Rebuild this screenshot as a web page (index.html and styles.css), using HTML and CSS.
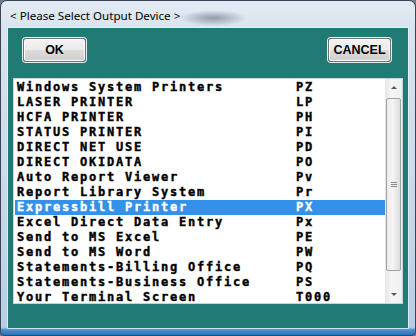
FILE: index.html
```html
<!DOCTYPE html>
<html>
<head>
  <title>Please Select Output Device</title>
  <link rel="stylesheet" href="styles.css">
</head>
<body>
  <div class="window">
    <div class="titlebar">
      <span class="title">&lt; Please Select Output Device &gt;</span>
    </div>
    <div class="client">
      <div class="buttons">
        <button class="btn" type="button">OK</button>
        <button class="btn btn-cancel" type="button">CANCEL</button>
      </div>
      <div class="listbox">
        <ul class="items">
          <li class="item"><span>Windows System Printers</span><span>PZ</span></li>
          <li class="item"><span>LASER PRINTER</span><span>LP</span></li>
          <li class="item"><span>HCFA PRINTER</span><span>PH</span></li>
          <li class="item"><span>STATUS PRINTER</span><span>PI</span></li>
          <li class="item"><span>DIRECT NET USE</span><span>PD</span></li>
          <li class="item"><span>DIRECT OKIDATA</span><span>PO</span></li>
          <li class="item"><span>Auto Report Viewer</span><span>Pv</span></li>
          <li class="item"><span>Report Library System</span><span>Pr</span></li>
          <li class="item selected"><span>Expressbill Printer</span><span>PX</span></li>
          <li class="item"><span>Excel Direct Data Entry</span><span>Px</span></li>
          <li class="item"><span>Send to MS Excel</span><span>PE</span></li>
          <li class="item"><span>Send to MS Word</span><span>PW</span></li>
          <li class="item"><span>Statements-Billing Office</span><span>PQ</span></li>
          <li class="item"><span>Statements-Business Office</span><span>PS</span></li>
          <li class="item"><span>Your Terminal Screen</span><span>T000</span></li>
        </ul>
        <div class="scrollbar">
          <div class="sb-btn"><span class="arrow-up"></span></div>
          <div class="sb-track">
            <div class="sb-thumb"><span class="grip"></span></div>
          </div>
          <div class="sb-btn"><span class="arrow-down"></span></div>
        </div>
      </div>
    </div>
  </div>
</body>
</html>
```

FILE: styles.css
```css
body {
  margin: 0;
  padding: 0;
  background: #6f7c8a;
}

.window {
  width: 416px;
  height: 336px;
  box-sizing: border-box;
  border: 1px solid #3a4656;
  border-radius: 7px 7px 4px 4px;
  padding: 0 7px 7px 7px;
  background:
    linear-gradient(#b8dcf6, #4a90d2 35%, #2f6fb4) bottom / 100% 8px no-repeat,
    radial-gradient(ellipse 34px 8px at 212px 17px, rgba(70, 82, 100, 0.5), rgba(70, 82, 100, 0)),
    linear-gradient(#e4ebf4 0, #d9e3ef 27px, #c9d8e9 60%, #b7cde4 100%);
}

.titlebar {
  height: 27px;
  display: flex;
  align-items: center;
  padding-left: 2px;
}

.title {
  font-family: "Noto Sans", sans-serif;
  font-size: 11.6px;
  color: #000;
  margin-top: 1px;
}

.client {
  height: 300px;
  box-sizing: border-box;
  background: #217a73;
  box-shadow: 0 0 0 1px rgba(235, 244, 250, 0.7);
  padding: 10px 5px 0 5px;
}

.buttons {
  display: flex;
  justify-content: space-between;
  padding: 0 12px 0 10px;
}

.btn {
  width: 63px;
  height: 24px;
  box-sizing: border-box;
  border: 1px solid #707070;
  border-radius: 3px;
  box-shadow: 0 0 0 1px #e9f1f0, inset 0 0 0 1px #fbfbfb;
  background: linear-gradient(#f3f3f3 0, #ebebeb 50%, #dcdcdc 51%, #cfcfcf 100%);
  font-family: "Liberation Sans", Arial, sans-serif;
  font-weight: bold;
  font-size: 12.5px;
  color: #000;
  padding: 0;
}

.listbox {
  margin-top: 16px;
  height: 226px;
  box-sizing: border-box;
  border: 1px solid #c9d3d3;
  background: #fff;
  display: flex;
  padding-left: 1px;
  overflow: hidden;
}

.items {
  list-style: none;
  margin: 0;
  padding: 1px 0 0 0;
  width: 370px;
}

.item {
  display: grid;
  grid-template-columns: 279px 1fr;
  height: 15px;
  line-height: 15px;
  padding-left: 2px;
  font-family: "DejaVu Sans Mono", monospace;
  font-weight: bold;
  font-size: 12px;
  letter-spacing: 1.78px;
  color: #000;
  white-space: nowrap;
  -webkit-text-stroke: 0.4px currentColor;
}

.item.selected {
  background: #3391ea;
  color: #fff;
}

.scrollbar {
  width: 17px;
  display: flex;
  flex-direction: column;
  background: linear-gradient(90deg, #e6e6e6, #f6f6f6 40%, #efefef);
}

.sb-btn {
  height: 17px;
  display: flex;
  align-items: center;
  justify-content: center;
}

.sb-track {
  flex: 1;
  padding: 2px 1px 15px 1px;
  display: flex;
}

.sb-thumb {
  flex: 1;
  border: 1px solid #a2a2a2;
  border-radius: 2px;
  background: linear-gradient(90deg, #ececec, #f5f5f5 45%, #dcdcdc);
  display: flex;
  align-items: center;
  justify-content: center;
}

.grip {
  width: 6px;
  height: 5px;
  background: repeating-linear-gradient(#8a8a8a 0, #8a8a8a 1px, transparent 1px, transparent 2px);
}

.arrow-up,
.arrow-down {
  width: 0;
  height: 0;
  border-left: 3px solid transparent;
  border-right: 3px solid transparent;
}

.arrow-up {
  border-bottom: 3px solid #5a5a5a;
}

.arrow-down {
  border-top: 3px solid #5a5a5a;
}
```
